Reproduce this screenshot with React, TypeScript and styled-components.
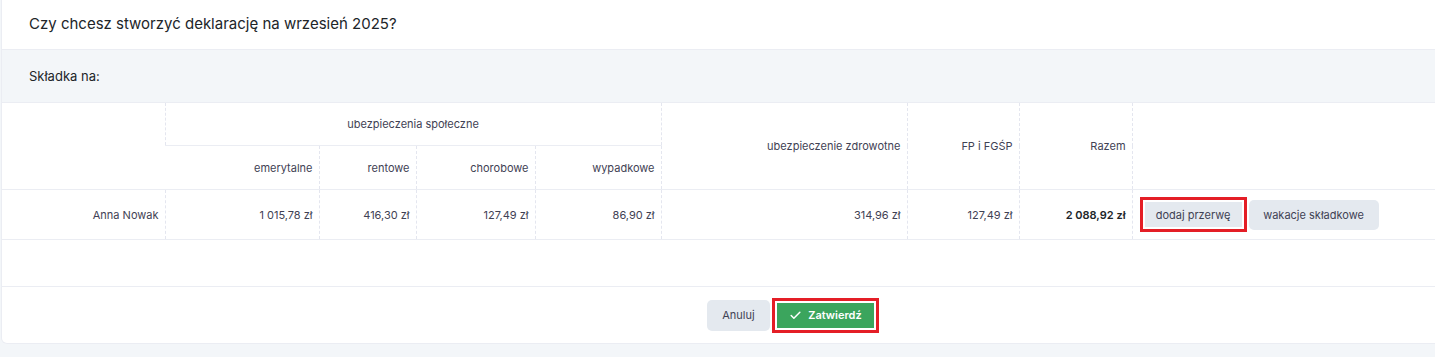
import React from 'react';
import styled, { createGlobalStyle } from 'styled-components';
import { Check } from 'lucide-react';

const GlobalStyle = createGlobalStyle`
  html, body {
    margin: 0;
    padding: 0;
    background: #f3f6f9;
    overflow: hidden;
    font-family: Inter, "Noto Sans", sans-serif;
    color: #3f4254;
  }
`;

const colWidths = [163, 154, 97, 119, 126, 246, 112, 113, 320];

const App: React.FC = () => {
  return (
    <>
      <GlobalStyle />
      <Card>
        <Header>Czy chcesz stworzyć deklarację na wrzesień 2025?</Header>
        <SubHeader>Składka na:</SubHeader>
        <Table>
          <colgroup>
            {colWidths.map((w, i) => (
              <col key={i} style={{ width: w }} />
            ))}
          </colgroup>
          <thead>
            <tr>
              <Th rowSpan={2} />
              <Th colSpan={4} $center $h={42}>ubezpieczenia społeczne</Th>
              <Th rowSpan={2}>ubezpieczenie zdrowotne</Th>
              <Th rowSpan={2}>FP i FGŚP</Th>
              <Th rowSpan={2}>Razem</Th>
              <Th rowSpan={2} />
            </tr>
            <tr>
              <Th $h={43}>emerytalne</Th>
              <Th>rentowe</Th>
              <Th>chorobowe</Th>
              <Th>wypadkowe</Th>
            </tr>
          </thead>
          <tbody>
            <tr>
              <Td>Anna Nowak</Td>
              <Td>1 015,78 zł</Td>
              <Td>416,30 zł</Td>
              <Td>127,49 zł</Td>
              <Td>86,90 zł</Td>
              <Td>314,96 zł</Td>
              <Td>127,49 zł</Td>
              <Td $bold>2 088,92 zł</Td>
              <ActionCell>
                <Actions>
                  <Highlight>
                    <GreyButton $variant="inner">dodaj przerwę</GreyButton>
                  </Highlight>
                  <GreyButton>wakacje składkowe</GreyButton>
                </Actions>
              </ActionCell>
            </tr>
            <EmptyRow>
              <td colSpan={9} />
            </EmptyRow>
          </tbody>
        </Table>
        <Footer>
          <GreyButton $variant="footer">Anuluj</GreyButton>
          <Highlight>
            <ConfirmButton>
              <Check size={13} strokeWidth={2.75} />
              Zatwierdź
            </ConfirmButton>
          </Highlight>
        </Footer>
      </Card>
    </>
  );
};

const Card = styled.div`
  margin-left: 1px;
  width: 1460px;
  background: #fff;
  border: 1px solid #ebedf3;
  border-top: none;
  border-radius: 0 0 6px 6px;
  overflow: hidden;
`;

const Header = styled.div`
  height: 50px;
  padding: 0 27px 2px;
  display: flex;
  align-items: center;
  font-size: 15px;
  color: #212529;
  border-bottom: 1px solid #ebedf3;
  box-sizing: border-box;
`;

const SubHeader = styled.div`
  height: 53px;
  padding: 0 27px;
  display: flex;
  align-items: center;
  font-size: 13px;
  color: #212529;
  background: #f3f6f9;
  border-bottom: 1px solid #ebedf3;
  box-sizing: border-box;
`;

const Table = styled.table`
  border-collapse: collapse;
  table-layout: fixed;
  width: 1450px;
  font-size: 11px;
  color: #3f4254;
`;

const Th = styled.th<{ $center?: boolean; $h?: number }>`
  font-weight: 400;
  text-align: ${(p) => (p.$center ? 'center' : 'right')};
  padding: 0 6px;
  height: ${(p) => (p.$h ? `${p.$h}px` : 'auto')};
  border-left: 1px dashed #e4e6ef;
  border-bottom: 1px solid #ebedf3;
  &:first-child {
    border-left: none;
  }
`;

const Td = styled.td<{ $bold?: boolean }>`
  text-align: right;
  padding: 0 6px;
  height: 49px;
  font-weight: ${(p) => (p.$bold ? 600 : 400)};
  color: ${(p) => (p.$bold ? '#212529' : '#3f4254')};
  border-left: 1px dashed #e4e6ef;
  border-bottom: 1px solid #ebedf3;
  &:first-child {
    border-left: none;
  }
`;

const ActionCell = styled.td`
  padding: 0 7px;
  border-left: 1px dashed #e4e6ef;
  border-bottom: 1px solid #ebedf3;
`;

const Actions = styled.div`
  display: flex;
  align-items: center;
  gap: 2px;
`;

const EmptyRow = styled.tr`
  height: 47px;
  td {
    border-bottom: 1px solid #ebedf3;
  }
`;

const Highlight = styled.div`
  border: 3px solid #e41e26;
  padding: 2px;
  background: #fff;
  display: flex;
`;

const GreyButton = styled.button<{ $variant?: 'inner' | 'footer' }>`
  font-family: Inter, "Noto Sans", sans-serif;
  font-size: 11px;
  color: #3f4254;
  background: #e4e9ef;
  border: none;
  border-radius: ${(p) => (p.$variant === 'inner' ? '0' : '5px')};
  height: ${(p) => (p.$variant === 'inner' ? '25px' : p.$variant === 'footer' ? '31px' : '30px')};
  width: ${(p) => (p.$variant === 'inner' ? '97px' : p.$variant === 'footer' ? '63px' : '130px')};
  padding: 0;
  cursor: pointer;
`;

const ConfirmButton = styled.button`
  display: flex;
  align-items: center;
  justify-content: center;
  gap: 6px;
  width: 97px;
  height: 25px;
  padding: 0;
  font-family: Inter, "Noto Sans", sans-serif;
  font-size: 11px;
  font-weight: 600;
  color: #fff;
  background: #3ba55d;
  border: none;
  cursor: pointer;
`;

const Footer = styled.div`
  height: 56px;
  display: flex;
  align-items: center;
  padding-left: 705px;
  gap: 2px;
`;

export default App;
